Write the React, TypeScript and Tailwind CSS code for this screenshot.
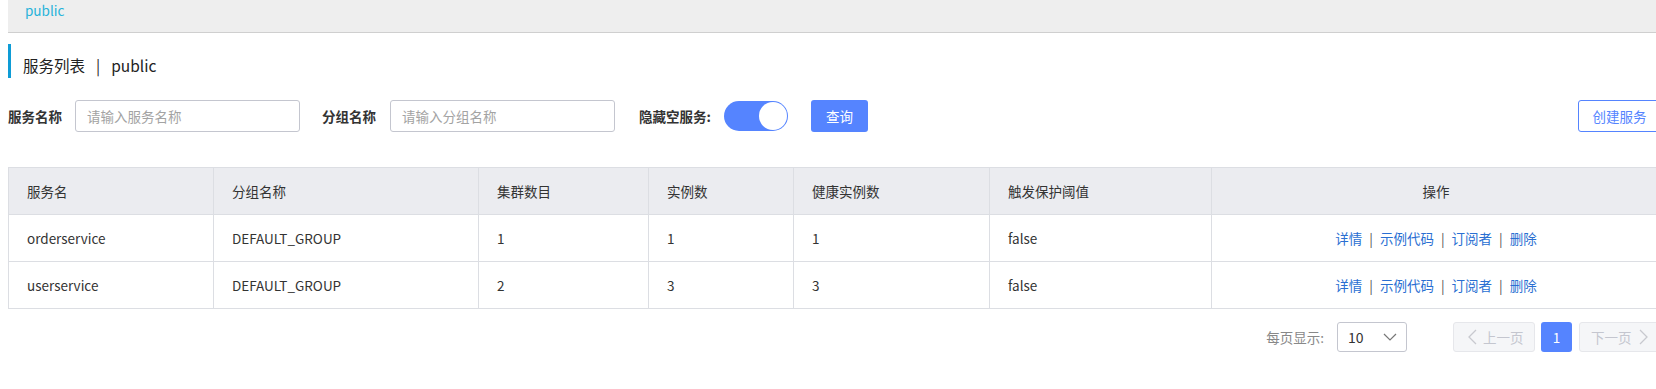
import React from 'react';

const headers = ['服务名', '分组名称', '集群数目', '实例数', '健康实例数', '触发保护阈值'];
const rows = [
  ['orderservice', 'DEFAULT_GROUP', '1', '1', '1', 'false'],
  ['userservice', 'DEFAULT_GROUP', '2', '3', '3', 'false'],
];

function Ops() {
  return (
    <div className="flex items-center text-[13.5px] leading-[20px]">
      <a className="text-[#2a6fd2] cursor-pointer">详情</a>
      <span className="mx-[7px] text-[#555]">|</span>
      <a className="text-[#2a6fd2] cursor-pointer">示例代码</a>
      <span className="mx-[7px] text-[#555]">|</span>
      <a className="text-[#2a6fd2] cursor-pointer">订阅者</a>
      <span className="mx-[7px] text-[#555]">|</span>
      <a className="text-[#2a6fd2] cursor-pointer">删除</a>
    </div>
  );
}

export default function App() {
  return (
    <div className="w-[1656px] h-[389px] overflow-hidden bg-white [font-family:'Noto_Sans_CJK_SC',sans-serif] text-[#333]">
      <div className="w-[1669px] pl-[8px] pr-[8px]">
        {/* top namespace bar */}
        <div className="h-[33px] bg-[#eeeeee] border-b border-[#cfcfcf] pl-[17px] pt-[2px]">
          <span className="block text-[13.5px] leading-[16px] text-[#27b3da]">public</span>
        </div>

        {/* title */}
        <div className="mt-[11px] h-[34px] border-l-[3px] border-[#0e9cd6] pl-[12px] pt-[9px] flex items-center text-[15.5px] text-[#222]">
          <span>服务列表</span>
          <span className="mx-[11px]">|</span>
          <span>public</span>
        </div>

        {/* filter row */}
        <div className="mt-[22px] h-[32px] flex items-center text-[13.5px]">
          <span className="w-[67px] font-bold text-[#333]">服务名称</span>
          <div className="w-[225px] h-[32px] border border-[#c4c6cf] rounded-[3px] flex items-center pl-[11px] text-[#a3a3a3]">
            请输入服务名称
          </div>
          <span className="ml-[22px] w-[68px] font-bold text-[#333]">分组名称</span>
          <div className="w-[225px] h-[32px] border border-[#c4c6cf] rounded-[3px] flex items-center pl-[11px] text-[#a3a3a3]">
            请输入分组名称
          </div>
          <span className="ml-[24px] w-[85px] font-bold text-[#333]">隐藏空服务:</span>
          <div className="w-[64px] h-[30px] rounded-full bg-[#5584ff] relative">
            <div className="absolute right-[1px] top-[1px] w-[28px] h-[28px] rounded-full bg-white" />
          </div>
          <button className="ml-[23px] w-[57px] h-[32px] rounded-[3px] bg-[#5584ff] text-white text-[13.5px]">
            查询
          </button>
          <button className="ml-auto w-[83px] h-[32px] rounded-[3px] border border-[#5584ff] bg-white text-[#5584ff] text-[13.5px]">
            创建服务
          </button>
        </div>

        {/* table */}
        <div className="mt-[35px] grid grid-cols-[205px_265px_170px_145px_196px_222px_1fr] border-l border-t border-[#dcdee3] text-[13.5px]">
          {headers.map((h) => (
            <div key={h} className="h-[47px] bg-[#ebecf0] border-r border-b border-[#dcdee3] flex items-center pl-[18px] text-[#333]">
              {h}
            </div>
          ))}
          <div className="h-[47px] bg-[#ebecf0] border-r border-b border-[#dcdee3] flex items-center justify-center text-[#333]">
            操作
          </div>
          {rows.map((r, i) => (
            <React.Fragment key={i}>
              {r.map((c, j) => (
                <div key={j} className="h-[47px] bg-white border-r border-b border-[#dcdee3] flex items-center pl-[18px] text-[#333]">
                  {c}
                </div>
              ))}
              <div className="h-[47px] bg-white border-r border-b border-[#dcdee3] flex items-center justify-center">
                <Ops />
              </div>
            </React.Fragment>
          ))}
        </div>

        {/* pagination */}
        <div className="mt-[13px] h-[30px] flex items-center justify-end text-[13.5px]">
          <span className="text-[#888]">每页显示:</span>
          <div className="ml-[13px] w-[70px] h-[30px] border border-[#c4c6cf] rounded-[3px] flex items-center justify-between pl-[10px] pr-[9px]">
            <span className="text-[#333] text-[14px]">10</span>
            <svg width="14" height="8" viewBox="0 0 14 8" fill="none">
              <polyline points="1,1 7,7 13,1" stroke="#777" strokeWidth="1.2" />
            </svg>
          </div>
          <div className="ml-[46px] w-[82px] h-[30px] border border-[#e6e7eb] bg-[#f5f6f8] rounded-[3px] flex items-center pl-[14px] text-[#c4c6cf]">
            <svg width="9" height="16" viewBox="0 0 9 16" fill="none">
              <polyline points="8,1 1,8 8,15" stroke="#c8c9cf" strokeWidth="1.3" />
            </svg>
            <span className="ml-[6px]">上一页</span>
          </div>
          <div className="ml-[6px] w-[31px] h-[30px] rounded-[3px] bg-[#5584ff] text-white flex items-center justify-center">
            1
          </div>
          <div className="ml-[7px] w-[82px] h-[30px] border border-[#e6e7eb] bg-[#f5f6f8] rounded-[3px] flex items-center pl-[11px] text-[#c4c6cf]">
            <span>下一页</span>
            <svg className="ml-[7px]" width="9" height="16" viewBox="0 0 9 16" fill="none">
              <polyline points="1,1 8,8 1,15" stroke="#c8c9cf" strokeWidth="1.3" />
            </svg>
          </div>
        </div>
      </div>
    </div>
  );
}
